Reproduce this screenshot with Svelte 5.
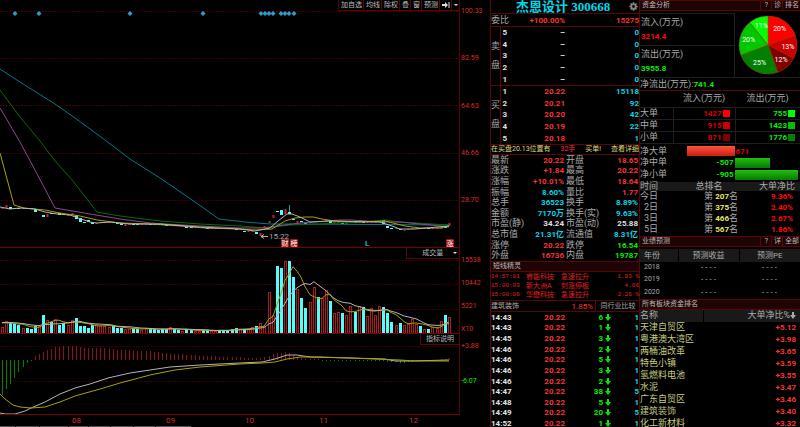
<script lang="ts">
  type Cell = { text: string; tone: string };

  const STEP = 4.1;
  const tools = ['加自选', '均线', '除权', '叠', '窗', '预测'];
  const priceTicks = ['100.33', '82.59', '64.63', '46.66', '28.70'];
  const volumeTicks = ['15538', '10442', '5221', 'X10'];
  const priceGrid = [11, 58, 105, 153, 200];
  const events = [15, 39, 130, 203, 261, 265, 269, 273, 281, 285, 289, 294];
  const months = [
    { label: '08', x: 72 },
    { label: '09', x: 166 },
    { label: '10', x: 245 },
    { label: '11', x: 319 },
    { label: '12', x: 409 }
  ];

  // one entry per trading day: r = up day, c = down day, number = bar height
  const volumes = (
    'r7 r13 c11 c10 c9 r6 c6 c5 c8 r8 c19 r14 c12 r15 c9 c11 r9 r14 c16 c8 c8 c6 c9 r10 r8 r8 r7 c8 c6 c6 ' +
    'r5 r5 c6 c5 r4 r6 c5 c5 c4 c5 c5 r7 c5 c4 r3 c5 c4 r3 r3 c4 c4 r3 r3 c4 c4 c4 c5 c6 r5 c5 r5 r7 c8 ' +
    'r11 r8 r42 r19 c68 c66 r73 c73 c57 r45 c36 c26 r32 r47 c37 r36 r44 c33 r21 r22 c21 r19 r28 c22 r28 ' +
    'c27 r18 r26 r19 r28 c27 c21 c12 r9 c11 r9 r10 r15 r10 c8 r5 c5 r7 r6 r13 c19 r17'
  )
    .split(' ')
    .map((v, i) => ({ up: v[0] === 'r', h: Number(v.slice(1)), x: Math.round(2 + i * STEP) }));

  // candle body as top:height
  const bodies = (
    '208:1 205:3 207:2 208:1 208:1 208:1 208:1 208:1 209:3 210:1 215:2 214:3 213:1 212:1 213:2 214:1 214:2 ' +
    '213:2 215:4 218:4 222:1 220:2 222:2 223:1 222:1 222:1 222:1 222:1 223:1 223:2 224:2 224:1 224:1 224:1 ' +
    '224:1 224:1 224:1 224:1 224:1 224:1 225:1 225:1 225:1 225:1 225:1 226:2 227:1 227:1 227:1 227:1 228:1 ' +
    '228:1 228:1 228:1 228:1 228:1 228:1 229:1 229:1 231:1 231:1 231:1 232:2 233:3 226:1 221:2 215:3 211:1 ' +
    '210:5 209:5 212:2 219:1 221:2 221:1 223:1 222:1 221:1 221:1 221:1 220:1 220:3 222:1 222:1 223:1 223:1 ' +
    '222:1 222:1 222:1 222:1 222:1 222:1 222:1 221:1 220:4 226:2 228:1 228:1 229:1 230:1 229:1 228:1 228:1 ' +
    '228:1 228:1 228:1 228:1 228:1 228:1 227:1 223:3'
  )
    .split(' ')
    .map((v) => v.split(':').map(Number));

  const histogram = [
    -35, -29, -24, -18, -12, -7, -3, -1, 4, 6, 8, 10, 11, 13, 13, 14, 14, 14, 14, 13, 12, 12, 12, 12, 12, 12,
    11, 11, 10, 10, 10, 10, 9, 9, 9, 9, 9, 8, 8, 7, 7, 6, 6, 6, 6, 5, 5, 5, 4, 4, 4, 4, 4, 3, 3, 3, 3, 3, 3,
    2, 2, 2, 2, 2, 3, 4, 6, 7, 7, 8, 7, 5, 3, 2, 1, 1, 1, 1, -1, -1, -1, -1, -1, -1, -1, -1, -1, -1, -1, -1,
    -1, -1, -1, -1, -2, -2, -2, -3, -3, -2, -2, -1, -1, -1, -1, -1, -1, 1, 1, 2
  ];

  function average(days: number): string {
    return volumes
      .map((v, i) => {
        let sum = 0;
        for (let k = 0; k < days; k++) sum += i - k < 0 ? 12 : volumes[i - k].h;
        return `${v.x},${86 - sum / days}`;
      })
      .join(' ');
  }

  const shares = [
    { pct: 20, color: '#ff0000' },
    { pct: 13, color: '#cc0000' },
    { pct: 12, color: '#800000' },
    { pct: 25, color: '#008000' },
    { pct: 20, color: '#00c800' },
    { pct: 11, color: '#00ff00' }
  ];
  const shareTotal = shares.reduce((a, s) => a + s.pct, 0);

  function polar(part: number, r: number): [number, number] {
    const a = (part / shareTotal) * Math.PI * 2;
    return [30 + r * Math.sin(a), 30 - r * Math.cos(a)];
  }

  let acc = 0;
  const slices = shares.map((s) => {
    const [x1, y1] = polar(acc, 29);
    const [tx, ty] = polar(acc + s.pct / 2, 20);
    acc += s.pct;
    const [x2, y2] = polar(acc, 29);
    return { ...s, tx, ty, d: `M30 30L${x1} ${y1}A29 29 0 0 1 ${x2} ${y2}Z` };
  });

  const asks = ['5', '4', '3', '2', '1'];
  const bids = [
    ['1', '20.22', '15118'],
    ['2', '20.21', '92'],
    ['3', '20.20', '42'],
    ['4', '20.19', '22'],
    ['5', '20.18', '1']
  ];

  const c = (text: string, tone: string): Cell => ({ text, tone });
  const quotes: [string, Cell, string, Cell][] = [
    ['最新', c('20.22', 'red'), '开盘', c('18.65', 'red')],
    ['涨跌', c('+1.84', 'red'), '最高', c('20.22', 'red')],
    ['涨幅', c('+10.01%', 'red'), '最低', c('18.64', 'red')],
    ['振幅', c('8.60%', 'cyan'), '量比', c('1.77', 'red')],
    ['总手', c('36523', 'cyan'), '换手', c('8.89%', 'cyan')],
    ['金额', c('7170万', 'cyan'), '换手(实)', c('9.63%', 'cyan')],
    ['市盈(静)', c('34.24', 'white'), '市盈(动)', c('25.88', 'white')],
    ['总市值', c('21.31亿', 'cyan'), '流通值', c('8.31亿', 'cyan')],
    ['涨停', c('20.22', 'red'), '跌停', c('16.54', 'green')],
    ['外盘', c('16736', 'red'), '内盘', c('19787', 'green')]
  ];

  const alerts = [
    ['14:57:01', '睿能科技', '急速拉升', '1.93 %'],
    ['15:00:03', '新大洲A', '封涨停板', '4.06'],
    ['15:00:06', '华懋科技', '急速拉升', '2.26 %']
  ];

  const trades = [
    ['14:43', 6, 1],
    ['14:43', 1, 1],
    ['14:45', 3, 1],
    ['14:46', 2, 1],
    ['14:46', 5, 1],
    ['14:46', 3, 1],
    ['14:46', 2, 1],
    ['14:47', 38, 5],
    ['14:48', 5, 1],
    ['14:49', 20, 5],
    ['14:52', 1, 1]
  ];

  const flows = [
    { name: '大单', inflow: 1427, outflow: 755, size: 'big' },
    { name: '中单', inflow: 915, outflow: 1423, size: 'mid' },
    { name: '小单', inflow: 871, outflow: 1776, size: 'small' }
  ];
  const nets = [
    { name: '净大单', value: 671 },
    { name: '净中单', value: -507 },
    { name: '净小单', value: -905 }
  ];
  const ranks = [
    ['今日', '207', '9.36%'],
    ['2日', '375', '2.40%'],
    ['3日', '466', '2.67%'],
    ['5日', '567', '1.86%']
  ];
  const years = ['2018', '2019', '2020'];
  const sectors = [
    ['天津自贸区', '+5.12'],
    ['粤港澳大湾区', '+3.98'],
    ['两桶油改革', '+3.65'],
    ['特色小镇', '+3.59'],
    ['氢燃料电池', '+3.55'],
    ['水泥', '+3.47'],
    ['广东自贸区', '+3.46'],
    ['建筑装饰', '+3.40'],
    ['化工新材料', '+3.32']
  ];
</script>

<main class="terminal">
  <section class="charts">
    <div class="panel">
      <svg viewBox="0 0 459 248">
        {#each priceGrid as y}
          <path class="grid" d="M0 {y + 0.5}H459" />
        {/each}
        <path class="frame" d="M0 247.5H459" />
        {#each events as x}
          <path class="event" d="M{x - 2.5} 13.5L{x} 11L{x + 2.5} 13.5L{x} 16Z" />
        {/each}
        {#each bodies as [y, h], i}
          <rect
            class={volumes[i].up ? 'up' : 'down'}
            x={volumes[i].x - (volumes[i].up ? 0.5 : 1)}
            {y}
            width={volumes[i].up ? 2 : 3}
            height={h}
          />
        {/each}
        <path class="wick" d="M289.5 205V212" />
        <polyline class="ma60" points="0,69 20,82 55,104 75,118 97,134 130,159 160,178 195,202 219,219 245,222 270,224 300,224 449,225" />
        <polyline class="ma30" points="0,90 20,117 40,141 55,161 73,181 97,212 120,216 160,221 200,224 240,226 265,228 290,225 320,224 360,222 385,220 400,222 449,225" />
        <polyline class="ma20" points="0,108 20,142 35,170 55,208 67,210 90,214 120,219 150,223 200,226 240,228 262,228 300,223 340,220 352,220 380,222 400,222 430,225 449,227" />
        <polyline class="slow" points="0,153 14,205 24,208 45,210 60,213 80,216 97,220 120,223 150,224 180,226 205,228 240,229 255,230 272,229 285,221 295,218 305,217 313,217 322,219 335,221 360,222 385,221 397,224 405,226 420,228 440,228 449,226" />
        <polyline class="fast" points="0,207 10,209 20,208 35,209 45,212 57,214 70,215 78,218 90,222 97,223 110,222 130,224 160,224 200,227 240,229 255,231 270,228 278,221 287,214 292,214 300,217 310,222 330,221 380,222 392,226 400,229 415,229 449,226" />
        <path class="pointer" d="M268 236.5H261M264 234.5L261 236.5L264 238.5" />
        <text class="low" x="269" y="239">15.22</text>
        <rect class="tag" x="281" y="239" width="8" height="8" />
        <text class="tag-text" x="285" y="246">财</text>
        <rect class="tag" x="290" y="239" width="8" height="8" />
        <text class="tag-text" x="294" y="246">榜</text>
        <text class="lock" x="365" y="246">L</text>
        <rect class="tag" x="446" y="239" width="8" height="8" />
        <text class="tag-text" x="450" y="246">涨</text>
      </svg>
      <div class="toolbar">
        {#each tools as tool}
          <button>{tool}</button>
        {/each}
        <button aria-label="收起">
          <svg class="ico" viewBox="0 0 8 8"><path d="M0 3h3V1l3 3-3 3V5H0zM6.5 1h1v6h-1z" /></svg>
        </button>
        <button aria-label="更多">
          <svg class="ico caret" viewBox="0 0 4 8"><path d="M0 3h4L2 5z" /></svg>
        </button>
      </div>
    </div>
    <div class="axis price-axis">
      {#each priceTicks as tick}<span>{tick}</span>{/each}
    </div>

    <div class="panel">
      <svg viewBox="0 0 459 86">
        {#each [12, 36, 61] as y}
          <path class="grid" d="M0 {y + 0.5}H459" />
        {/each}
        {#each volumes as v}
          {#if v.up}
            <rect class="hollow" x={v.x - 0.5} y={86.5 - v.h} width="2" height={v.h - 1} />
          {:else}
            <rect class="down" x={v.x - 1} y={86 - v.h} width="3" height={v.h} />
          {/if}
        {/each}
        <polyline class="slow" points={average(5)} />
        <polyline class="fast" points={average(10)} />
        <path class="frame" d="M0 85.5H459" />
      </svg>
      <button class="corner volume">成交量 <svg class="ico caret" viewBox="0 0 4 8"><path d="M0 3h4L2 5z" /></svg></button>
    </div>
    <div class="axis volume-axis">
      {#each volumeTicks as tick}<span>{tick}</span>{/each}
    </div>

    <div class="panel">
      <svg viewBox="0 0 459 81">
        <path class="grid" d="M0 12.5H459M0 47.5H459" />
        {#each histogram as h, i}
          <rect
            class={h > 0 ? 'hist-up' : 'hist-down'}
            x={volumes[i].x}
            y={h > 0 ? 26 - h : 26}
            width="1"
            height={Math.abs(h)}
          />
        {/each}
        <polyline class="fast" points="0,79 5,80 15,80 25,77 31,74 45,68 60,60 75,54 90,50 108,44 130,39 150,36 170,33 200,31 240,29 262,28 275,25 287,21 297,21 310,23 350,24 385,25 395,27 410,27 449,26" />
        <polyline class="slow" points="0,60 5,65 13,71 20,73 31,74 45,73 60,68 75,62 100,55 120,49 150,41 175,36 200,33 240,30 262,29 275,28 287,25 300,23 320,23 350,24 400,26 415,27 449,27" />
        <path class="frame" d="M0 80.5H459" />
      </svg>
      <button class="corner">指标说明</button>
    </div>
    <div class="axis macd-axis">
      <span>+3.88</span>
      <span class="green">-6.07</span>
    </div>

    <svg class="months" viewBox="0 0 459 12">
      {#each months as m}
        <text x={m.x} y="8">{m.label}</text>
      {/each}
      <path d="M0 11.5H15M16 11.5H39M40 11.5H68M69 11.5H88M89 11.5H110M111 11.5H133M134 11.5H155M156 11.5H191" />
    </svg>
  </section>

  <section class="quote">
    <header class="stock">
      <h1>杰恩设计 300668</h1>
      <button aria-label="设置">
        <svg viewBox="0 0 16 16">
          <circle cx="8" cy="8" r="4" />
          <path d="M8 0.5V4M8 12V15.5M0.5 8H4M12 8H15.5M2.7 2.7L5.2 5.2M10.8 10.8L13.3 13.3M2.7 13.3L5.2 10.8M10.8 5.2L13.3 2.7" />
        </svg>
      </button>
    </header>

    <div class="ratio">
      <span class="label">委比</span>
      <b class="red">+100.00%</b>
      <b class="red">15275</b>
    </div>

    <div class="book">
      <div class="side"><span>卖</span><span>盘</span></div>
      <table>
        <tbody>
          {#each asks as level}
            <tr><td class="white">{level}</td><td class="white">–</td><td class="cyan">0</td></tr>
          {/each}
        </tbody>
      </table>
    </div>
    <div class="book">
      <div class="side"><span>买</span><span>盘</span></div>
      <table>
        <tbody>
          {#each bids as [level, price, size]}
            <tr><td class="white">{level}</td><td class="red">{price}</td><td class="cyan">{size}</td></tr>
          {/each}
        </tbody>
      </table>
    </div>

    <div class="notice">
      <span>在买盘20.13位置有</span>
      <span class="red">32手</span>
      <span>买单!</span>
      <a href="#detail">查看详细</a>
    </div>

    <table class="stats">
      <tbody>
        {#each quotes as [l1, v1, l2, v2]}
          <tr>
            <th>{l1}</th>
            <td class={v1.tone}>{v1.text}</td>
            <th>{l2}</th>
            <td class={v2.tone}>{v2.text}</td>
          </tr>
        {/each}
      </tbody>
    </table>

    <h2 class="bar">短线精灵</h2>
    <table class="alerts">
      <tbody>
        {#each alerts as [time, name, event, value]}
          <tr><td class="mono">{time}</td><td>{name}</td><td>{event}</td><td class="mono">{value}</td></tr>
        {/each}
      </tbody>
    </table>

    <div class="industry">
      <span>建筑装饰</span>
      <span class="red pct">1.85%</span>
      <button>同行业比较</button>
    </div>
    <table class="trades">
      <tbody>
        {#each trades as [time, size, count]}
          <tr>
            <td class="white">{time}</td>
            <td class="red">20.22</td>
            <td class="green">{size}</td>
            <td><svg class="arrow" viewBox="0 0 6 7"><path d="M2 0h2v3h2L3 7 0 3h2z" /></svg></td>
            <td class="cyan">{count}</td>
          </tr>
        {/each}
      </tbody>
    </table>
  </section>

  <section class="funds">
    <header class="bar">
      <h2>资金分析</h2>
      <button>?</button><button>诊</button><button>排名</button>
    </header>
    <div class="summary">
      <div class="totals">
        <div><span class="label">流入(万元)</span><b class="hot">3214.4</b></div>
        <div><span class="label">流出(万元)</span><b class="green">3955.8</b></div>
      </div>
      <svg class="pie" viewBox="0 0 60 60">
        {#each slices as s}
          <path d={s.d} fill={s.color} />
        {/each}
        {#each slices as s}
          <text x={s.tx} y={s.ty + 2}>{s.pct}%</text>
        {/each}
      </svg>
    </div>
    <p class="net-total"><span class="label">净流出(万元):</span><b class="green">741.4</b></p>

    <table class="flows">
      <thead>
        <tr><th></th><th>流入(万元)</th><th>流出(万元)</th></tr>
      </thead>
      <tbody>
        {#each flows as f}
          <tr>
            <th>{f.name}</th>
            <td class="in"><span>{f.inflow}<i class="in-{f.size}"></i></span></td>
            <td class="green"><span>{f.outflow}<i class="out-{f.size}"></i></span></td>
          </tr>
        {/each}
      </tbody>
    </table>

    <div class="nets">
      {#each nets as n}
        <div class="net">
          <span class="label">{n.name}</span>
          <div class="half left">
            {#if n.value > 0}
              <div class="fill gain" style="width:{(n.value / 905) * 100}%"></div>
            {:else}
              <b class="green">{n.value}</b>
            {/if}
          </div>
          <div class="half">
            {#if n.value > 0}
              <b class="in">{n.value}</b>
            {:else}
              <div class="fill loss" style="width:{(-n.value / 905) * 100}%"></div>
            {/if}
          </div>
        </div>
      {/each}
    </div>

    <table class="ranks">
      <thead>
        <tr><th>时间</th><th>总排名</th><th>大单净比</th></tr>
      </thead>
      <tbody>
        {#each ranks as [day, rank, ratio]}
          <tr><td>{day}</td><td>第 <b>{rank}</b>名</td><td class="hot">{ratio}</td></tr>
        {/each}
      </tbody>
    </table>

    <header class="bar">
      <h2>业绩预测</h2>
      <button>?</button><button>详</button><button>全部</button>
    </header>
    <table class="forecast">
      <thead>
        <tr><th>年份</th><th>预测收益</th><th>预测PE</th></tr>
      </thead>
      <tbody>
        {#each years as year}
          <tr><td>{year}</td><td class="empty">----</td><td class="empty">----</td></tr>
        {/each}
      </tbody>
    </table>

    <h2 class="bar">所有板块资金排名</h2>
    <table class="sectors">
      <thead>
        <tr><th>名称</th><th>大单净比%<svg class="arrow" viewBox="0 0 6 7"><path d="M2 0h2v3h2L3 7 0 3h2z" /></svg></th></tr>
      </thead>
      <tbody>
        {#each sectors as [name, value]}
          <tr><td>{name}</td><td class="red">{value}</td></tr>
        {/each}
      </tbody>
    </table>
  </section>
</main>

<style>
  :global(body) {
    background: #000;
  }

  .terminal {
    --line: #5a0505;
    --dim: #1e1e1e;
    --cjk: "Noto Sans CJK SC", sans-serif;
    display: grid;
    grid-template-columns: minmax(0, 1fr) 150px 160px;
    height: 100vh;
    overflow: hidden;
    background: #000;
    color: #aaa;
    font: 9px/9px Roboto, var(--cjk);
  }
  .terminal * { box-sizing: border-box; }

  h1, h2, p { margin: 0; font-weight: 400; }
  button {
    margin: 0;
    padding: 0 1px 0 2px;
    border: 0;
    background: none;
    color: inherit;
    font: inherit;
    white-space: nowrap;
    cursor: pointer;
  }
  table { width: 100%; border-collapse: collapse; table-layout: fixed; }
  th, td { padding: 0; text-align: left; white-space: nowrap; }
  th { font-weight: 400; }
  b { font-size: 8px; font-weight: 700; }

  .red { color: #f83434; }
  .hot { color: #ff0808; }
  .cyan { color: #00d8e8; }
  .green { color: #00f000; }
  .white { color: #e0e0e0; }
  .in { color: #d80000; }
  .label { color: #aaa; }

  /* charts */
  .charts {
    display: grid;
    grid-template-columns: minmax(0, 1fr) 31px;
    align-content: start;
  }
  .panel { position: relative; }
  .panel > svg { display: block; width: 100%; }
  .grid { stroke: #3c0000; stroke-dasharray: 2 1; }
  .frame { stroke: #780000; }
  .event { fill: #2aa0d0; }
  .up { fill: #c02828; }
  .down { fill: #54fcfc; }
  .hollow { fill: none; stroke: #b01c1c; }
  .wick { stroke: #2a9898; }
  polyline { fill: none; stroke-width: 1; }
  .fast { stroke: #b4b4b4; }
  .slow { stroke: #a8a000; }
  .ma20 { stroke: #8c4890; }
  .ma30 { stroke: #007000; }
  .ma60 { stroke: #007888; }
  .hist-up { fill: #8c1414; }
  .hist-down { fill: #008400; }
  .pointer { fill: none; stroke: #aaa; }
  .low { fill: #aaa; font-size: 8px; }
  .tag { fill: #9c1010; }
  .tag-text { fill: #fff; font-size: 7px; text-anchor: middle; }
  .lock { fill: #00b8c8; font-size: 8px; font-weight: 700; }

  .toolbar {
    position: absolute;
    top: 0;
    right: 0;
    display: flex;
    height: 11px;
    border-bottom: 1px solid var(--line);
    background: #000;
    font-size: 7px;
    color: #bbb;
  }
  .toolbar button { border-left: 1px solid var(--line); }
  .ico { width: 8px; height: 8px; fill: #ddd; vertical-align: middle; }
  .caret { width: 4px; }
  .corner {
    position: absolute;
    top: 0;
    right: 0;
    height: 11px;
    padding: 0 5px;
    border: 1px solid var(--line);
    border-width: 0 0 1px 1px;
    background: #000;
    color: #bbb;
    font-size: 7px;
  }
  .volume { padding: 0 2px 0 15px; }
  .volume .ico { margin-left: 8px; }

  .axis {
    display: flex;
    flex-direction: column;
    justify-content: space-between;
    padding-left: 1px;
    border-left: 1px solid var(--line);
    color: #d82c2c;
    font-size: 7px;
  }
  .price-axis { padding-top: 7px; padding-bottom: 43px; }
  .volume-axis { padding-top: 8px; }
  .macd-axis { padding-top: 8px; padding-bottom: 29px; }
  .months { display: block; width: 100%; }
  .months text { fill: #d82c2c; font-size: 8px; }
  .months path { stroke: #555; }

  /* quote */
  .quote {
    display: flex;
    flex-direction: column;
    border: 1px solid var(--line);
    border-width: 0 1px;
  }
  .quote > *, .funds > * { flex-shrink: 0; }
  .stock {
    display: flex;
    align-items: center;
    height: 13px;
    padding-left: 25px;
  }
  .stock h1 {
    flex: 1;
    color: #00d8e8;
    font: bold 13px/13px "Liberation Serif", var(--cjk);
    white-space: nowrap;
  }
  .stock button { height: 13px; }
  .stock svg { display: block; width: 9px; height: 9px; fill: none; stroke: #888; stroke-width: 3; }
  .ratio {
    display: grid;
    grid-template-columns: 20px 54px 1fr;
    align-items: center;
    height: 14px;
    border: 1px solid var(--line);
    border-width: 1px 0;
  }
  .ratio b { text-align: right; }
  .book {
    display: grid;
    grid-template-columns: 10px 1fr;
    height: 59px;
    border-bottom: 1px solid var(--line);
  }
  .side {
    display: flex;
    flex-direction: column;
    justify-content: center;
    gap: 10px;
    border-right: 1px solid var(--line);
  }
  .book table { height: 58px; font-size: 8px; font-weight: 700; }
  .book td { text-align: right; }
  .book td:first-child { width: 6px; }
  .book td:nth-child(2) { width: 58px; }
  .notice {
    display: flex;
    align-items: center;
    justify-content: space-between;
    height: 10px;
    border-bottom: 1px solid var(--line);
    color: #d8d880;
    font-size: 7px;
    white-space: nowrap;
  }
  .notice a { color: inherit; text-decoration: none; }
  .stats { height: 106px; }
  .stats th { width: 40px; padding-left: 2px; }
  .stats th:first-child { width: 35px; padding-left: 0; }
  .stats td { width: 38px; text-align: right; font-size: 8px; font-weight: 700; }
  .stats td:last-child { width: auto; padding-right: 1px; }

  .bar {
    display: flex;
    align-items: center;
    height: 11px;
    padding-left: 2px;
    border: 1px solid var(--line);
    border-width: 1px 0;
    background: #1e0404;
    font-size: 7px;
    color: #bbb;
  }
  .bar h2 { flex: 1; font-size: 7px; }
  .bar button { min-width: 11px; height: 9px; border-left: 1px solid var(--line); }

  .alerts { height: 28px; font-size: 7px; line-height: 8px; color: #e02020; }
  .alerts td { width: 35px; }
  .alerts td:last-child { width: auto; text-align: right; }
  .mono { font: 6px/8px "Liberation Mono", monospace; }

  .industry {
    display: grid;
    grid-template-columns: 1fr auto 46px;
    align-items: center;
    height: 12px;
    border: 1px solid var(--line);
    border-width: 1px 0;
    font-size: 7px;
  }
  .industry button { height: 10px; margin-left: 2px; border-left: 1px solid var(--line); }
  .pct { font-size: 8px; }
  .trades { height: 117px; font-size: 8px; font-weight: 700; }
  .trades td { text-align: right; }
  .trades td:first-child { width: 24px; text-align: left; }
  .trades td:nth-child(2) { width: 50px; }
  .trades td:nth-child(3) { width: 38px; }
  .trades td:nth-child(4) { width: 9px; }
  .arrow { display: inline-block; width: 6px; height: 7px; fill: currentColor; vertical-align: middle; }
  .trades .arrow { display: block; margin-left: 2px; fill: #00e800; }

  /* funds */
  .funds { display: flex; flex-direction: column; }
  .summary {
    display: grid;
    grid-template-columns: 95px 1fr;
    height: 67px;
    padding-top: 2px;
    border-bottom: 1px solid var(--dim);
  }
  .totals { display: grid; grid-template-rows: 1fr 1fr; border-right: 1px solid var(--dim); }
  .totals div {
    display: flex;
    flex-direction: column;
    justify-content: center;
    gap: 5px;
    padding-left: 1px;
    border-top: 1px solid var(--dim);
  }
  .pie { width: 60px; height: 60px; margin: 2px auto 0; }
  .pie path { stroke: #a04000; stroke-width: 0.5; }
  .pie text { fill: #fff; font-size: 7px; text-anchor: middle; }
  .net-total {
    height: 13px;
    line-height: 12px;
    border-bottom: 1px solid var(--line);
  }

  .flows { height: 52px; border-bottom: 1px solid var(--line); }
  .flows th, .flows td { height: 12px; border-bottom: 1px solid var(--dim); }
  .flows th:first-child { width: 33px; }
  .flows th:nth-child(2) { width: 62px; }
  .flows thead th { height: 16px; text-align: center; }
  .flows td { padding-right: 5px; border-left: 1px solid var(--dim); font-size: 8px; }
  .flows td span { display: flex; align-items: center; justify-content: flex-end; gap: 1px; font-weight: 700; }
  .flows i { width: 7px; height: 7px; }
  .in-big { background: #ff0000; }
  .in-mid { background: #c80000; }
  .in-small { background: #800000; }
  .out-big { background: #00ff00; }
  .out-mid { background: #00c000; }
  .out-small { background: #008000; }

  .nets { display: grid; height: 38px; padding: 2px 2px 1px 0; }
  .net { display: grid; grid-template-columns: 31px 1fr 1fr; align-items: center; }
  .half { display: flex; align-items: center; gap: 1px; height: 10px; }
  .half b { padding: 0 1px; }
  .left { justify-content: flex-end; }
  .fill { height: 10px; }
  .gain { background: linear-gradient(#ff5040, #c82010); }
  .loss { background: linear-gradient(#20c010, #087800); }

  .ranks { height: 54px; }
  .ranks thead { background: #191919; }
  .ranks th:first-child { width: 20px; }
  .ranks th:nth-child(2) { width: 90px; padding-left: 8px; text-align: center; }
  .ranks td:nth-child(2) { padding-left: 32px; text-align: center; }
  .ranks th:last-child { padding-right: 5px; text-align: right; }
  .ranks td:first-child { padding-right: 2px; text-align: right; }
  .ranks td:last-child { padding-right: 7px; text-align: right; font-size: 8px; font-weight: 700; }
  .ranks b { color: #e8e868; }

  .forecast { height: 50px; margin-top: 2px; font-size: 7px; }
  .forecast th { height: 13px; background: #191919; font-size: 8px; text-align: center; }
  .forecast th + th { border-left: 1px solid #000; }
  .forecast th:first-child { width: 38px; padding-left: 4px; text-align: left; }
  .forecast td:first-child { padding-left: 4px; }
  .empty { font-family: "Liberation Mono", monospace; text-align: center; }

  .sectors tr { height: 12px; }
  .sectors thead { background: #191919; }
  .sectors th:first-child { width: 63px; border-right: 1px solid #000; }
  .sectors tbody { color: #c8cc80; }
  .sectors th:last-child, .sectors td:last-child { padding-right: 4px; text-align: right; }
  .sectors td:last-child { font-size: 8px; font-weight: 700; }
</style>
